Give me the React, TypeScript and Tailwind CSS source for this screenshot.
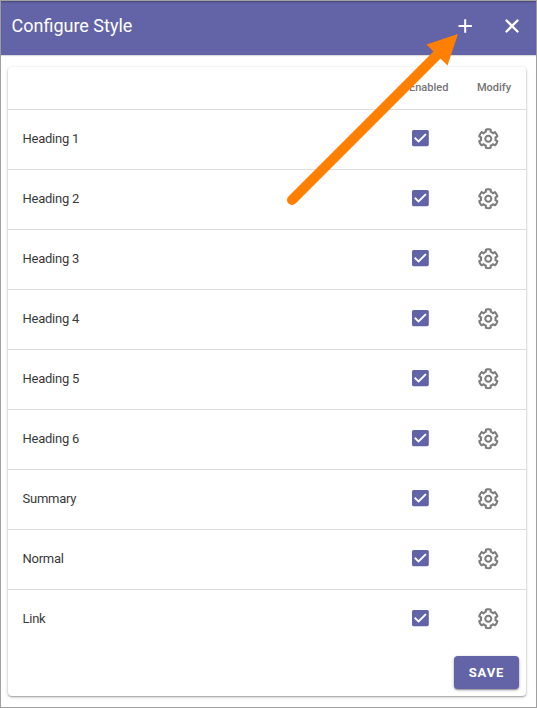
const styles = [
  "Heading 1",
  "Heading 2",
  "Heading 3",
  "Heading 4",
  "Heading 5",
  "Heading 6",
  "Summary",
  "Normal",
  "Link",
];

function CogIcon() {
  return (
    <svg viewBox="-13 0 524 524" className="block size-[22px] fill-[#7c7c7c]">
      <path d="M452.515 237l31.843-18.382c9.426-5.441 13.996-16.542 11.177-27.054-11.404-42.531-33.842-80.547-64.058-110.797-7.68-7.688-19.575-9.246-28.985-3.811l-31.785 18.358a196.276 196.276 0 0 0-32.899-19.02V39.541a24.016 24.016 0 0 0-17.842-23.206c-41.761-11.107-86.117-11.121-127.93-.001-10.519 2.798-17.844 12.321-17.844 23.206v36.753a196.276 196.276 0 0 0-32.899 19.02l-31.785-18.358c-9.41-5.435-21.304-3.877-28.985 3.811-30.216 30.25-52.654 68.265-64.058 110.797-2.819 10.512 1.751 21.613 11.177 27.054L59.485 237a197.715 197.715 0 0 0 0 37.999l-31.843 18.382c-9.426 5.441-13.996 16.542-11.177 27.054 11.404 42.531 33.842 80.547 64.058 110.797 7.68 7.688 19.575 9.246 28.985 3.811l31.785-18.358a196.202 196.202 0 0 0 32.899 19.019v36.753a24.016 24.016 0 0 0 17.842 23.206c41.761 11.107 86.117 11.122 127.93.001 10.519-2.798 17.844-12.321 17.844-23.206v-36.753a196.34 196.34 0 0 0 32.899-19.019l31.785 18.358c9.41 5.435 21.304 3.877 28.985-3.811 30.216-30.25 52.654-68.266 64.058-110.797 2.819-10.512-1.751-21.613-11.177-27.054L452.515 275c1.22-12.65 1.22-25.35 0-38zm-52.679 63.019l43.718 25.24a200.138 200.138 0 0 1-33.849 58.528l-43.829-25.309c-31.984 27.397-36.659 30.077-76.168 44.029v50.599a200.917 200.917 0 0 1-67.618 0v-50.599c-39.504-13.95-44.196-16.642-76.168-44.029l-43.829 25.309a200.15 200.15 0 0 1-33.849-58.528l43.718-25.24c-7.63-41.299-7.634-46.693 0-88.038l-43.718-25.24c7.85-21.351 19.307-41.194 33.849-58.529l43.829 25.309c31.984-27.397 36.66-30.077 76.168-44.029V58.845a200.917 200.917 0 0 1 67.618 0v50.599c39.504 13.95 44.196 16.642 76.168 44.029l43.829-25.309a200.143 200.143 0 0 1 33.849 58.529l-43.718 25.24c7.631 41.3 7.634 46.694 0 88.037zM256 160c-52.935 0-96 43.065-96 96s43.065 96 96 96 96-43.065 96-96-43.065-96-96-96zm0 144c-26.468 0-48-21.532-48-48 0-26.467 21.532-48 48-48s48 21.532 48 48c0 26.468-21.532 48-48 48z" />
    </svg>
  );
}

function Checkbox() {
  return (
    <svg viewBox="0 0 17 17" className="block size-[17px]">
      <rect x="0" y="0" width="16.8" height="16.2" rx="1.6" fill="#6264a7" />
      <path d="M2.7 7.7 L6.6 11.5 L13.9 4.1" fill="none" stroke="#fff" strokeWidth="1.9" />
    </svg>
  );
}

export default function App() {
  return (
    <div className="relative flex h-[708px] w-[537px] flex-col border border-[#a0a0a0] bg-white font-[Roboto,sans-serif]">
      <header className="flex h-[54px] shrink-0 items-center bg-[#6264a7] pl-[10.5px] pr-[17px] pb-1 text-white shadow-[inset_0_2px_2px_-1px_rgba(0,0,0,0.3),0_1px_1px_rgba(0,0,0,0.14)]">
        <h1 className="flex-1 text-[18px] leading-6 font-normal">Configure Style</h1>
        <svg viewBox="0 0 14 14" className="mr-[33px] size-[14px]">
          <path d="M7.2 0.3V13.7M0.5 7H13.9" stroke="#fff" strokeWidth="2" />
        </svg>
        <svg viewBox="0 0 14 14" className="size-[14px]">
          <path d="M1.5 1.5L12.5 12.5M12.5 1.5L1.5 12.5" stroke="#fff" strokeWidth="2.3" strokeLinecap="round" />
        </svg>
      </header>
      <main className="mt-3 ml-[7px] flex h-[629px] w-[518px] flex-col rounded bg-white shadow-[0_1px_3px_rgba(0,0,0,0.3),0_1px_1px_rgba(0,0,0,0.16)]">
        <div className="flex h-[43px] items-center border-b border-[#dcdcdc] text-[11px] font-medium text-[#757575]">
          <span className="flex-1" />
          <span className="w-[60px] pl-[10px]">Enabled</span>
          <span className="w-[67px] pl-[18px]">Modify</span>
        </div>
        {styles.map((name) => (
          <div
            key={name}
            className="flex h-[60px] items-center border-b border-[#dcdcdc] pl-[14.5px] last-of-type:border-transparent"
          >
            <span className="flex-1 pb-0.5 text-[13px] tracking-[-0.25px] text-[#3a3a3a]">{name}</span>
            <span className="w-[65px] pb-0.5">
              <Checkbox />
            </span>
            <span className="w-[49px] pb-px">
              <CogIcon />
            </span>
          </div>
        ))}
        <footer className="flex justify-end pt-1.5 pr-[7px]">
          <button className="h-[33px] w-[65px] rounded-[4px] bg-[#6264a7] text-[13px] font-bold tracking-[0.9px] text-white shadow-[0_1px_3px_rgba(0,0,0,0.35),0_1px_1px_rgba(0,0,0,0.2)]">
            SAVE
          </button>
        </footer>
      </main>
      <svg viewBox="0 0 537 708" className="pointer-events-none absolute -top-px -left-px h-[708px] w-[537px]">
        <path d="M292 200L438 54" stroke="#ff8000" strokeWidth="10" strokeLinecap="round" />
        <path d="M458 34L426.5 44.5L447.5 65.5Z" fill="#ff8000" />
      </svg>
    </div>
  );
}
